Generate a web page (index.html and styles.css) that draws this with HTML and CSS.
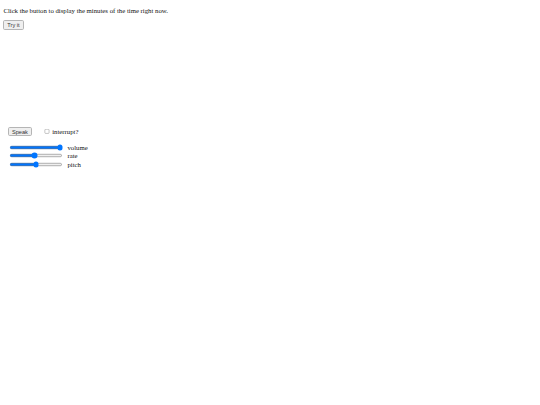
FILE: index.html
```html
<!DOCTYPE html>
<html>
<head>
<meta charset="utf-8">
<link rel="stylesheet" href="styles.css">
</head>
<body>
<p class="intro">Click the button to display the minutes of the time right now.</p>
<button class="btn">Try it</button>
<p class="demo"></p>
<div class="speech">
  <div class="speak-row">
    <button class="btn">Speak</button>
    <label class="interrupt"><input type="checkbox" class="check"> interrupt?</label>
  </div>
  <div class="sliders">
    <div class="slider-row"><input type="range" class="range" min="0" max="1" step="0.1" value="1"> volume</div>
    <div class="slider-row"><input type="range" class="range" min="0.1" max="2" step="0.1" value="1"> rate</div>
    <div class="slider-row"><input type="range" class="range" min="0" max="2" step="0.1" value="1"> pitch</div>
  </div>
</div>
</body>
</html>
```
FILE: styles.css
```css
body {
  margin: 0 3.375px 3.375px;
  font-family: "Liberation Serif", "Times New Roman", serif;
  font-size: 6.75px;
  color: #111;
  background: #fff;
}
.intro {
  margin: 6.33px 0 6.75px;
  padding-top: 0.42px;
}
.demo {
  margin: 6.75px 0;
  height: 83.1px;
}
.speech {
  padding: 0 4.64px;
}
.speak-row {
  display: flex;
  align-items: center;
  gap: 10.97px;
  margin-bottom: 6.75px;
}
.btn {
  zoom: 0.421875;
  font-family: Arial, "Liberation Sans", sans-serif;
  font-size: 13.33px;
  color: #333;
  background: #efefef;
  border: 2px solid #b5b5b5;
  border-radius: 4px;
  padding: 2px 7px;
}
.check,
.range {
  zoom: 0.421875;
}
.interrupt {
  display: flex;
  align-items: center;
  gap: 1px;
}
.slider-row {
  display: flex;
  align-items: center;
  gap: 3.375px;
  height: 8.44px;
}
```
